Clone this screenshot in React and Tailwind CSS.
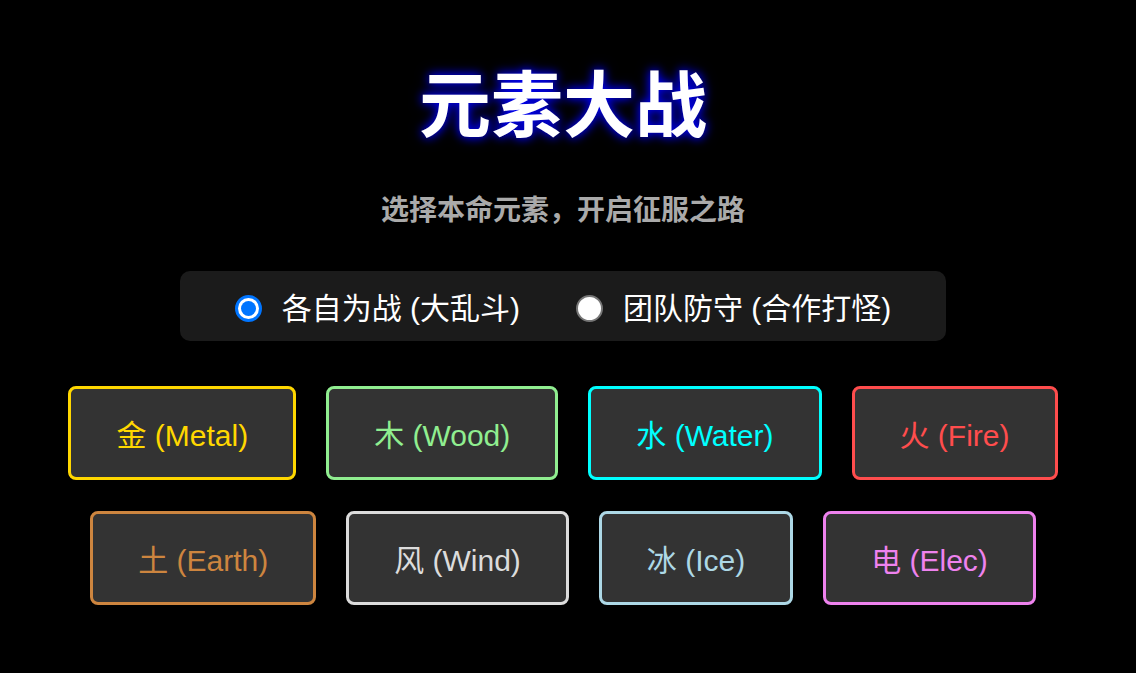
import { useState } from "react";

const ELEMENTS = [
  [
    { id: "metal", label: "金 (Metal)", cls: "border-[#ffd700] text-[#ffd700]" },
    { id: "wood", label: "木 (Wood)", cls: "border-[#90ee90] text-[#90ee90]" },
    { id: "water", label: "水 (Water)", cls: "border-[#00ffff] text-[#00ffff]" },
    { id: "fire", label: "火 (Fire)", cls: "border-[#ff4d4d] text-[#ff4d4d]" },
  ],
  [
    { id: "earth", label: "土 (Earth)", cls: "border-[#cd853f] text-[#cd853f]" },
    { id: "wind", label: "风 (Wind)", cls: "border-[#dcdcdc] text-[#dcdcdc]" },
    { id: "ice", label: "冰 (Ice)", cls: "border-[#add8e6] text-[#add8e6]" },
    { id: "elec", label: "电 (Elec)", cls: "border-[#ee82ee] text-[#ee82ee]" },
  ],
];

const MODES = [
  { id: "ffa", label: "各自为战 (大乱斗)" },
  { id: "coop", label: "团队防守 (合作打怪)" },
];

function Radio({ checked }) {
  if (checked) {
    return (
      <span className="flex h-[27px] w-[27px] items-center justify-center rounded-full bg-[#0075ff]">
        <span className="flex h-[21px] w-[21px] items-center justify-center rounded-full bg-white">
          <span className="h-[15px] w-[15px] rounded-full bg-[#0075ff]" />
        </span>
      </span>
    );
  }
  return <span className="h-[27px] w-[27px] rounded-full border-2 border-[#767676] bg-white" />;
}

export default function App() {
  const [mode, setMode] = useState("ffa");
  const [picked, setPicked] = useState(null);

  return (
    <div className="min-h-screen bg-black font-['Liberation_Sans','Noto_Sans_CJK_SC',sans-serif]">
      <div className="flex w-[1126px] flex-col items-center">
        <h1 className="mt-[60px] font-['Noto_Sans_CJK_SC',sans-serif] text-[72px] font-bold leading-[80px] text-white [text-shadow:0_0_10px_#0000ff,0_0_14px_#00008b]">
          元素大战
        </h1>
        <p className="mt-[52px] font-['Noto_Sans_CJK_SC',sans-serif] text-[28px] font-bold leading-[32px] text-[#aaaaaa]">
          选择本命元素，开启征服之路
        </p>

        {/* 模式选择 */}
        <div className="mt-[47px] flex h-[70px] items-center gap-[56px] rounded-[10px] bg-[#1b1b1b] px-[55px] pt-[5px]">
          {MODES.map((m) => (
            <label
              key={m.id}
              onClick={() => setMode(m.id)}
              className="flex cursor-pointer items-center gap-[20px] text-[30px] leading-[34px] text-white"
            >
              <Radio checked={mode === m.id} />
              <span>{m.label}</span>
            </label>
          ))}
        </div>

        {/* 元素按钮 */}
        <div className="mt-[45px] flex flex-col items-center gap-[31px]">
          {ELEMENTS.map((row, i) => (
            <div key={i} className="flex gap-[30px]">
              {row.map((el) => (
                <button
                  key={el.id}
                  type="button"
                  onClick={() => setPicked(el.id)}
                  className={`rounded-[8px] border-[3px] bg-[#333333] px-[45px] pb-[24px] pt-[30px] text-[30px] leading-[34px] ${el.cls} ${
                    picked === el.id ? "brightness-125" : ""
                  }`}
                >
                  {el.label}
                </button>
              ))}
            </div>
          ))}
        </div>
      </div>
    </div>
  );
}
